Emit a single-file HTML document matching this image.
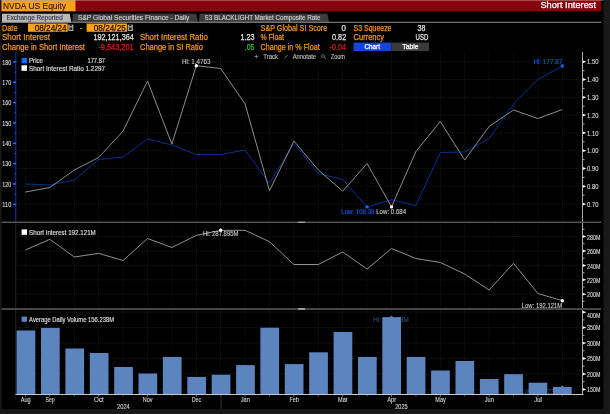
<!DOCTYPE html>
<html><head><meta charset="utf-8"><style>
html,body{margin:0;padding:0;background:#191919;}
body{width:610px;height:414px;overflow:hidden;position:relative;}
svg{display:block;position:absolute;left:-20px;top:-20px;filter:blur(0.35px);}
svg text{font-family:"Liberation Sans",sans-serif;}
</style></head><body>
<svg width="650" height="454" viewBox="-20 -20 650 454">
<rect x="-20" y="-20" width="650" height="454" fill="#191919"/>
<rect x="1.5" y="-10" width="601.9" height="419.2" rx="2" fill="#000"/>
<rect x="1.5" y="0" width="602" height="1" fill="#485050"/><rect x="1.5" y="0" width="599.6" height="1" fill="#a85050"/>
<rect x="1.5" y="1" width="599.6" height="10.3" fill="#89000d"/>
<rect x="1.5" y="1" width="74" height="10.3" fill="#f9a11c"/>
<rect x="1.5" y="0" width="74" height="1" fill="#c8a068"/>
<text x="3.0" y="8.7" font-size="8.6" fill="#241200" textLength="63.0" lengthAdjust="spacingAndGlyphs"  stroke="#241200" stroke-width="0.1">NVDA US Equity</text>
<text x="540.4" y="8.2" font-size="8.2" fill="#ffffff" textLength="55.6" lengthAdjust="spacingAndGlyphs"  stroke="#ffffff" stroke-width="0.25">Short Interest</text>
<path d="M2 13.8 H69.7 L71.4 22.5 H2 Z" fill="#b8b8b8"/>
<text x="6.4" y="20.3" font-size="6.6" fill="#2a3040" textLength="56.3" lengthAdjust="spacingAndGlyphs"  stroke="#2a3040" stroke-width="0.1">Exchange Reported</text>
<path d="M72.8 13.8 H196.3 L198 22.5 H72.2 Z" fill="#3c3c3c"/>
<text x="78" y="20.3" font-size="6.6" fill="#dadada" textLength="111.3" lengthAdjust="spacingAndGlyphs"  stroke="#dadada" stroke-width="0.1">S&amp;P Global Securities Finance - Daily</text>
<path d="M199.6 13.8 H327.4 L329.1 22.5 H199 Z" fill="#3c3c3c"/>
<text x="204.6" y="20.3" font-size="6.6" fill="#dadada" textLength="115.8" lengthAdjust="spacingAndGlyphs"  stroke="#dadada" stroke-width="0.1">S3 BLACKLIGHT Market Composite Rate</text>
<rect x="1.5" y="21.8" width="599.6" height="1" fill="#8c8c8c"/>
<text x="1.9" y="30.5" font-size="8.7" fill="#f5981a" textLength="15.6" lengthAdjust="spacingAndGlyphs"  stroke="#f5981a" stroke-width="0.25">Date</text>
<rect x="28" y="23.5" width="39.7" height="8.3" fill="#f9a11c"/>
<text x="34.7" y="30.5" font-size="8.7" fill="#1a0d00" textLength="31.9" lengthAdjust="spacingAndGlyphs"  stroke="#1a0d00" stroke-width="0.25">08/24/24</text>
<rect x="68.2" y="24.6" width="5.2" height="6.4" fill="#a4a4a4"/><rect x="69.7" y="24.4" width="2.2" height="1.7" fill="#181818"/><rect x="69.4" y="27.4" width="2.8" height="2.4" fill="#202020"/>
<text x="80" y="30.5" font-size="8.7" fill="#f5981a" textLength="2.4" lengthAdjust="spacingAndGlyphs"  stroke="#f5981a" stroke-width="0.25">-</text>
<rect x="86.6" y="23.5" width="40.4" height="8.3" fill="#f9a11c"/>
<text x="93.8" y="30.5" font-size="8.7" fill="#1a0d00" textLength="32.0" lengthAdjust="spacingAndGlyphs"  stroke="#1a0d00" stroke-width="0.25">08/24/25</text>
<rect x="127.7" y="24.6" width="5.2" height="6.4" fill="#a4a4a4"/><rect x="129.2" y="24.4" width="2.2" height="1.7" fill="#181818"/><rect x="128.9" y="27.4" width="2.8" height="2.4" fill="#202020"/>
<text x="260.6" y="30.5" font-size="8.7" fill="#f5981a" textLength="66.6" lengthAdjust="spacingAndGlyphs"  stroke="#f5981a" stroke-width="0.25">S&amp;P Global SI Score</text>
<text x="341.6" y="30.5" font-size="8.7" fill="#e4e4e4" textLength="4.4" lengthAdjust="spacingAndGlyphs"  stroke="#e4e4e4" stroke-width="0.25">0</text>
<text x="353.6" y="30.5" font-size="8.7" fill="#f5981a" textLength="37.9" lengthAdjust="spacingAndGlyphs"  stroke="#f5981a" stroke-width="0.25">S3 Squeeze</text>
<text x="417.5" y="30.5" font-size="8.7" fill="#e4e4e4" textLength="7.9" lengthAdjust="spacingAndGlyphs"  stroke="#e4e4e4" stroke-width="0.25">38</text>
<text x="1.9" y="39.9" font-size="8.7" fill="#f5981a" textLength="48.1" lengthAdjust="spacingAndGlyphs"  stroke="#f5981a" stroke-width="0.25">Short Interest</text>
<text x="93.5" y="39.9" font-size="8.7" fill="#e4e4e4" textLength="40.2" lengthAdjust="spacingAndGlyphs"  stroke="#e4e4e4" stroke-width="0.25">192,121,364</text>
<text x="140" y="39.9" font-size="8.7" fill="#f5981a" textLength="67.8" lengthAdjust="spacingAndGlyphs"  stroke="#f5981a" stroke-width="0.25">Short Interest Ratio</text>
<text x="240.5" y="39.9" font-size="8.7" fill="#e4e4e4" textLength="14.0" lengthAdjust="spacingAndGlyphs"  stroke="#e4e4e4" stroke-width="0.25">1.23</text>
<text x="260.6" y="39.9" font-size="8.7" fill="#f5981a" textLength="23.4" lengthAdjust="spacingAndGlyphs"  stroke="#f5981a" stroke-width="0.25">% Float</text>
<text x="332" y="39.9" font-size="8.7" fill="#e4e4e4" textLength="14.2" lengthAdjust="spacingAndGlyphs"  stroke="#e4e4e4" stroke-width="0.25">0.82</text>
<text x="353.6" y="39.9" font-size="8.7" fill="#f5981a" textLength="30.4" lengthAdjust="spacingAndGlyphs"  stroke="#f5981a" stroke-width="0.25">Currency</text>
<text x="415.6" y="39.9" font-size="8.7" fill="#e4e4e4" textLength="12.7" lengthAdjust="spacingAndGlyphs"  stroke="#e4e4e4" stroke-width="0.25">USD</text>
<text x="1.9" y="49.6" font-size="8.7" fill="#f5981a" textLength="83.1" lengthAdjust="spacingAndGlyphs"  stroke="#f5981a" stroke-width="0.25">Change in Short Interest</text>
<text x="98.4" y="49.6" font-size="8.7" fill="#e01a1a" textLength="35.3" lengthAdjust="spacingAndGlyphs"  stroke="#e01a1a" stroke-width="0.25">-9,543,201</text>
<text x="140" y="49.6" font-size="8.7" fill="#f5981a" textLength="62.9" lengthAdjust="spacingAndGlyphs"  stroke="#f5981a" stroke-width="0.25">Change in SI Ratio</text>
<text x="244.7" y="49.6" font-size="8.7" fill="#22c022" textLength="9.8" lengthAdjust="spacingAndGlyphs"  stroke="#22c022" stroke-width="0.25">.05</text>
<text x="260.6" y="49.6" font-size="8.7" fill="#f5981a" textLength="59.1" lengthAdjust="spacingAndGlyphs"  stroke="#f5981a" stroke-width="0.25">Change in % Float</text>
<text x="329.5" y="49.6" font-size="8.7" fill="#e01a1a" textLength="16.4" lengthAdjust="spacingAndGlyphs"  stroke="#e01a1a" stroke-width="0.25">-0.04</text>
<rect x="353.6" y="42.6" width="37.6" height="8.4" fill="#1246d8"/>
<text x="364.4" y="49.2" font-size="6.8" fill="#ffffff" textLength="15.6" lengthAdjust="spacingAndGlyphs"  stroke="#ffffff" stroke-width="0.25">Chart</text>
<rect x="391.2" y="42.6" width="37.8" height="8.4" fill="#3a3a3a"/>
<text x="402.3" y="49.2" font-size="6.8" fill="#ffffff" textLength="16.2" lengthAdjust="spacingAndGlyphs"  stroke="#ffffff" stroke-width="0.25">Table</text>
<line x1="25.5" y1="52" x2="25.5" y2="221" stroke="#181818" stroke-width="0.8" stroke-dasharray="1,1"/>
<line x1="25.5" y1="224" x2="25.5" y2="307.5" stroke="#181818" stroke-width="0.8" stroke-dasharray="1,1"/>
<line x1="25.5" y1="311" x2="25.5" y2="394.5" stroke="#181818" stroke-width="0.8" stroke-dasharray="1,1"/>
<line x1="50.0" y1="52" x2="50.0" y2="221" stroke="#181818" stroke-width="0.8" stroke-dasharray="1,1"/>
<line x1="50.0" y1="224" x2="50.0" y2="307.5" stroke="#181818" stroke-width="0.8" stroke-dasharray="1,1"/>
<line x1="50.0" y1="311" x2="50.0" y2="394.5" stroke="#181818" stroke-width="0.8" stroke-dasharray="1,1"/>
<line x1="74.5" y1="52" x2="74.5" y2="221" stroke="#181818" stroke-width="0.8" stroke-dasharray="1,1"/>
<line x1="74.5" y1="224" x2="74.5" y2="307.5" stroke="#181818" stroke-width="0.8" stroke-dasharray="1,1"/>
<line x1="74.5" y1="311" x2="74.5" y2="394.5" stroke="#181818" stroke-width="0.8" stroke-dasharray="1,1"/>
<line x1="98.5" y1="52" x2="98.5" y2="221" stroke="#181818" stroke-width="0.8" stroke-dasharray="1,1"/>
<line x1="98.5" y1="224" x2="98.5" y2="307.5" stroke="#181818" stroke-width="0.8" stroke-dasharray="1,1"/>
<line x1="98.5" y1="311" x2="98.5" y2="394.5" stroke="#181818" stroke-width="0.8" stroke-dasharray="1,1"/>
<line x1="123.0" y1="52" x2="123.0" y2="221" stroke="#181818" stroke-width="0.8" stroke-dasharray="1,1"/>
<line x1="123.0" y1="224" x2="123.0" y2="307.5" stroke="#181818" stroke-width="0.8" stroke-dasharray="1,1"/>
<line x1="123.0" y1="311" x2="123.0" y2="394.5" stroke="#181818" stroke-width="0.8" stroke-dasharray="1,1"/>
<line x1="147.5" y1="52" x2="147.5" y2="221" stroke="#181818" stroke-width="0.8" stroke-dasharray="1,1"/>
<line x1="147.5" y1="224" x2="147.5" y2="307.5" stroke="#181818" stroke-width="0.8" stroke-dasharray="1,1"/>
<line x1="147.5" y1="311" x2="147.5" y2="394.5" stroke="#181818" stroke-width="0.8" stroke-dasharray="1,1"/>
<line x1="172.0" y1="52" x2="172.0" y2="221" stroke="#181818" stroke-width="0.8" stroke-dasharray="1,1"/>
<line x1="172.0" y1="224" x2="172.0" y2="307.5" stroke="#181818" stroke-width="0.8" stroke-dasharray="1,1"/>
<line x1="172.0" y1="311" x2="172.0" y2="394.5" stroke="#181818" stroke-width="0.8" stroke-dasharray="1,1"/>
<line x1="196.5" y1="52" x2="196.5" y2="221" stroke="#181818" stroke-width="0.8" stroke-dasharray="1,1"/>
<line x1="196.5" y1="224" x2="196.5" y2="307.5" stroke="#181818" stroke-width="0.8" stroke-dasharray="1,1"/>
<line x1="196.5" y1="311" x2="196.5" y2="394.5" stroke="#181818" stroke-width="0.8" stroke-dasharray="1,1"/>
<line x1="220.5" y1="52" x2="220.5" y2="221" stroke="#181818" stroke-width="0.8" stroke-dasharray="1,1"/>
<line x1="220.5" y1="224" x2="220.5" y2="307.5" stroke="#181818" stroke-width="0.8" stroke-dasharray="1,1"/>
<line x1="220.5" y1="311" x2="220.5" y2="394.5" stroke="#181818" stroke-width="0.8" stroke-dasharray="1,1"/>
<line x1="245.0" y1="52" x2="245.0" y2="221" stroke="#181818" stroke-width="0.8" stroke-dasharray="1,1"/>
<line x1="245.0" y1="224" x2="245.0" y2="307.5" stroke="#181818" stroke-width="0.8" stroke-dasharray="1,1"/>
<line x1="245.0" y1="311" x2="245.0" y2="394.5" stroke="#181818" stroke-width="0.8" stroke-dasharray="1,1"/>
<line x1="269.5" y1="52" x2="269.5" y2="221" stroke="#181818" stroke-width="0.8" stroke-dasharray="1,1"/>
<line x1="269.5" y1="224" x2="269.5" y2="307.5" stroke="#181818" stroke-width="0.8" stroke-dasharray="1,1"/>
<line x1="269.5" y1="311" x2="269.5" y2="394.5" stroke="#181818" stroke-width="0.8" stroke-dasharray="1,1"/>
<line x1="294.0" y1="52" x2="294.0" y2="221" stroke="#181818" stroke-width="0.8" stroke-dasharray="1,1"/>
<line x1="294.0" y1="224" x2="294.0" y2="307.5" stroke="#181818" stroke-width="0.8" stroke-dasharray="1,1"/>
<line x1="294.0" y1="311" x2="294.0" y2="394.5" stroke="#181818" stroke-width="0.8" stroke-dasharray="1,1"/>
<line x1="318.5" y1="52" x2="318.5" y2="221" stroke="#181818" stroke-width="0.8" stroke-dasharray="1,1"/>
<line x1="318.5" y1="224" x2="318.5" y2="307.5" stroke="#181818" stroke-width="0.8" stroke-dasharray="1,1"/>
<line x1="318.5" y1="311" x2="318.5" y2="394.5" stroke="#181818" stroke-width="0.8" stroke-dasharray="1,1"/>
<line x1="342.5" y1="52" x2="342.5" y2="221" stroke="#181818" stroke-width="0.8" stroke-dasharray="1,1"/>
<line x1="342.5" y1="224" x2="342.5" y2="307.5" stroke="#181818" stroke-width="0.8" stroke-dasharray="1,1"/>
<line x1="342.5" y1="311" x2="342.5" y2="394.5" stroke="#181818" stroke-width="0.8" stroke-dasharray="1,1"/>
<line x1="367.0" y1="52" x2="367.0" y2="221" stroke="#181818" stroke-width="0.8" stroke-dasharray="1,1"/>
<line x1="367.0" y1="224" x2="367.0" y2="307.5" stroke="#181818" stroke-width="0.8" stroke-dasharray="1,1"/>
<line x1="367.0" y1="311" x2="367.0" y2="394.5" stroke="#181818" stroke-width="0.8" stroke-dasharray="1,1"/>
<line x1="391.5" y1="52" x2="391.5" y2="221" stroke="#181818" stroke-width="0.8" stroke-dasharray="1,1"/>
<line x1="391.5" y1="224" x2="391.5" y2="307.5" stroke="#181818" stroke-width="0.8" stroke-dasharray="1,1"/>
<line x1="391.5" y1="311" x2="391.5" y2="394.5" stroke="#181818" stroke-width="0.8" stroke-dasharray="1,1"/>
<line x1="416.0" y1="52" x2="416.0" y2="221" stroke="#181818" stroke-width="0.8" stroke-dasharray="1,1"/>
<line x1="416.0" y1="224" x2="416.0" y2="307.5" stroke="#181818" stroke-width="0.8" stroke-dasharray="1,1"/>
<line x1="416.0" y1="311" x2="416.0" y2="394.5" stroke="#181818" stroke-width="0.8" stroke-dasharray="1,1"/>
<line x1="440.5" y1="52" x2="440.5" y2="221" stroke="#181818" stroke-width="0.8" stroke-dasharray="1,1"/>
<line x1="440.5" y1="224" x2="440.5" y2="307.5" stroke="#181818" stroke-width="0.8" stroke-dasharray="1,1"/>
<line x1="440.5" y1="311" x2="440.5" y2="394.5" stroke="#181818" stroke-width="0.8" stroke-dasharray="1,1"/>
<line x1="464.5" y1="52" x2="464.5" y2="221" stroke="#181818" stroke-width="0.8" stroke-dasharray="1,1"/>
<line x1="464.5" y1="224" x2="464.5" y2="307.5" stroke="#181818" stroke-width="0.8" stroke-dasharray="1,1"/>
<line x1="464.5" y1="311" x2="464.5" y2="394.5" stroke="#181818" stroke-width="0.8" stroke-dasharray="1,1"/>
<line x1="489.0" y1="52" x2="489.0" y2="221" stroke="#181818" stroke-width="0.8" stroke-dasharray="1,1"/>
<line x1="489.0" y1="224" x2="489.0" y2="307.5" stroke="#181818" stroke-width="0.8" stroke-dasharray="1,1"/>
<line x1="489.0" y1="311" x2="489.0" y2="394.5" stroke="#181818" stroke-width="0.8" stroke-dasharray="1,1"/>
<line x1="513.5" y1="52" x2="513.5" y2="221" stroke="#181818" stroke-width="0.8" stroke-dasharray="1,1"/>
<line x1="513.5" y1="224" x2="513.5" y2="307.5" stroke="#181818" stroke-width="0.8" stroke-dasharray="1,1"/>
<line x1="513.5" y1="311" x2="513.5" y2="394.5" stroke="#181818" stroke-width="0.8" stroke-dasharray="1,1"/>
<line x1="538.0" y1="52" x2="538.0" y2="221" stroke="#181818" stroke-width="0.8" stroke-dasharray="1,1"/>
<line x1="538.0" y1="224" x2="538.0" y2="307.5" stroke="#181818" stroke-width="0.8" stroke-dasharray="1,1"/>
<line x1="538.0" y1="311" x2="538.0" y2="394.5" stroke="#181818" stroke-width="0.8" stroke-dasharray="1,1"/>
<line x1="562.5" y1="52" x2="562.5" y2="221" stroke="#181818" stroke-width="0.8" stroke-dasharray="1,1"/>
<line x1="562.5" y1="224" x2="562.5" y2="307.5" stroke="#181818" stroke-width="0.8" stroke-dasharray="1,1"/>
<line x1="562.5" y1="311" x2="562.5" y2="394.5" stroke="#181818" stroke-width="0.8" stroke-dasharray="1,1"/>
<line x1="16" y1="61.75" x2="583" y2="61.75" stroke="#1d1d1d" stroke-width="0.8" stroke-dasharray="1,1"/>
<line x1="16" y1="79.53999999999999" x2="583" y2="79.53999999999999" stroke="#1d1d1d" stroke-width="0.8" stroke-dasharray="1,1"/>
<line x1="16" y1="97.33" x2="583" y2="97.33" stroke="#1d1d1d" stroke-width="0.8" stroke-dasharray="1,1"/>
<line x1="16" y1="115.12" x2="583" y2="115.12" stroke="#1d1d1d" stroke-width="0.8" stroke-dasharray="1,1"/>
<line x1="16" y1="132.91" x2="583" y2="132.91" stroke="#1d1d1d" stroke-width="0.8" stroke-dasharray="1,1"/>
<line x1="16" y1="150.7" x2="583" y2="150.7" stroke="#1d1d1d" stroke-width="0.8" stroke-dasharray="1,1"/>
<line x1="16" y1="168.49" x2="583" y2="168.49" stroke="#1d1d1d" stroke-width="0.8" stroke-dasharray="1,1"/>
<line x1="16" y1="186.28" x2="583" y2="186.28" stroke="#1d1d1d" stroke-width="0.8" stroke-dasharray="1,1"/>
<line x1="16" y1="204.07" x2="583" y2="204.07" stroke="#1d1d1d" stroke-width="0.8" stroke-dasharray="1,1"/>
<line x1="16" y1="236.5" x2="583" y2="236.5" stroke="#1d1d1d" stroke-width="0.8" stroke-dasharray="1,1"/>
<line x1="16" y1="251" x2="583" y2="251" stroke="#1d1d1d" stroke-width="0.8" stroke-dasharray="1,1"/>
<line x1="16" y1="265.5" x2="583" y2="265.5" stroke="#1d1d1d" stroke-width="0.8" stroke-dasharray="1,1"/>
<line x1="16" y1="279.8" x2="583" y2="279.8" stroke="#1d1d1d" stroke-width="0.8" stroke-dasharray="1,1"/>
<line x1="16" y1="294.2" x2="583" y2="294.2" stroke="#1d1d1d" stroke-width="0.8" stroke-dasharray="1,1"/>
<line x1="16" y1="312.2" x2="583" y2="312.2" stroke="#1d1d1d" stroke-width="0.8" stroke-dasharray="1,1"/>
<line x1="16" y1="327.64" x2="583" y2="327.64" stroke="#1d1d1d" stroke-width="0.8" stroke-dasharray="1,1"/>
<line x1="16" y1="343.08" x2="583" y2="343.08" stroke="#1d1d1d" stroke-width="0.8" stroke-dasharray="1,1"/>
<line x1="16" y1="358.52" x2="583" y2="358.52" stroke="#1d1d1d" stroke-width="0.8" stroke-dasharray="1,1"/>
<line x1="16" y1="373.96" x2="583" y2="373.96" stroke="#1d1d1d" stroke-width="0.8" stroke-dasharray="1,1"/>
<line x1="16" y1="389.4" x2="583" y2="389.4" stroke="#1d1d1d" stroke-width="0.8" stroke-dasharray="1,1"/>
<rect x="15.1" y="52" width="1.2" height="170" fill="#0b2c94"/>
<text x="2.3" y="64.5" font-size="6.8" fill="#dcdcdc" textLength="9.0" lengthAdjust="spacingAndGlyphs"  stroke="#dcdcdc" stroke-width="0.12">180</text>
<rect x="13" y="61.1" width="3.2" height="1.5" fill="#1f6fff"/>
<rect x="14.2" y="71.6" width="1.5" height="1" fill="#1a5ae0"/>
<text x="2.3" y="84.8" font-size="6.8" fill="#dcdcdc" textLength="9.0" lengthAdjust="spacingAndGlyphs"  stroke="#dcdcdc" stroke-width="0.12">170</text>
<rect x="13" y="81.5" width="3.2" height="1.5" fill="#1f6fff"/>
<rect x="14.2" y="92.0" width="1.5" height="1" fill="#1a5ae0"/>
<text x="2.3" y="105.2" font-size="6.8" fill="#dcdcdc" textLength="9.0" lengthAdjust="spacingAndGlyphs"  stroke="#dcdcdc" stroke-width="0.12">160</text>
<rect x="13" y="101.8" width="3.2" height="1.5" fill="#1f6fff"/>
<rect x="14.2" y="112.3" width="1.5" height="1" fill="#1a5ae0"/>
<text x="2.3" y="125.5" font-size="6.8" fill="#dcdcdc" textLength="9.0" lengthAdjust="spacingAndGlyphs"  stroke="#dcdcdc" stroke-width="0.12">150</text>
<rect x="13" y="122.2" width="3.2" height="1.5" fill="#1f6fff"/>
<rect x="14.2" y="132.7" width="1.5" height="1" fill="#1a5ae0"/>
<text x="2.3" y="145.9" font-size="6.8" fill="#dcdcdc" textLength="9.0" lengthAdjust="spacingAndGlyphs"  stroke="#dcdcdc" stroke-width="0.12">140</text>
<rect x="13" y="142.6" width="3.2" height="1.5" fill="#1f6fff"/>
<rect x="14.2" y="153.0" width="1.5" height="1" fill="#1a5ae0"/>
<text x="2.3" y="166.2" font-size="6.8" fill="#dcdcdc" textLength="9.0" lengthAdjust="spacingAndGlyphs"  stroke="#dcdcdc" stroke-width="0.12">130</text>
<rect x="13" y="162.9" width="3.2" height="1.5" fill="#1f6fff"/>
<rect x="14.2" y="173.3" width="1.5" height="1" fill="#1a5ae0"/>
<text x="2.3" y="186.6" font-size="6.8" fill="#dcdcdc" textLength="9.0" lengthAdjust="spacingAndGlyphs"  stroke="#dcdcdc" stroke-width="0.12">120</text>
<rect x="13" y="183.2" width="3.2" height="1.5" fill="#1f6fff"/>
<rect x="14.2" y="193.7" width="1.5" height="1" fill="#1a5ae0"/>
<text x="2.3" y="207.0" font-size="6.8" fill="#dcdcdc" textLength="9.0" lengthAdjust="spacingAndGlyphs"  stroke="#dcdcdc" stroke-width="0.12">110</text>
<rect x="13" y="203.6" width="3.2" height="1.5" fill="#1f6fff"/>
<rect x="15.3" y="223.5" width="0.9" height="170.5" fill="#2a2a30"/>
<rect x="582" y="51.9" width="1" height="342.6" fill="#a8a8a8"/>
<path d="M582.8 60.4 l3.6 1.4 l-3.6 1.4 z" fill="#f4f4f4"/>
<text x="587.1" y="64.3" font-size="6.8" fill="#dcdcdc" textLength="11.3" lengthAdjust="spacingAndGlyphs"  stroke="#dcdcdc" stroke-width="0.12">1.50</text>
<rect x="583" y="70.2" width="1.5" height="1" fill="#b0b0b0"/>
<path d="M582.8 78.1 l3.6 1.4 l-3.6 1.4 z" fill="#f4f4f4"/>
<text x="587.1" y="82.1" font-size="6.8" fill="#dcdcdc" textLength="11.3" lengthAdjust="spacingAndGlyphs"  stroke="#dcdcdc" stroke-width="0.12">1.40</text>
<rect x="583" y="87.9" width="1.5" height="1" fill="#b0b0b0"/>
<path d="M582.8 95.9 l3.6 1.4 l-3.6 1.4 z" fill="#f4f4f4"/>
<text x="587.1" y="99.9" font-size="6.8" fill="#dcdcdc" textLength="11.3" lengthAdjust="spacingAndGlyphs"  stroke="#dcdcdc" stroke-width="0.12">1.30</text>
<rect x="583" y="105.7" width="1.5" height="1" fill="#b0b0b0"/>
<path d="M582.8 113.7 l3.6 1.4 l-3.6 1.4 z" fill="#f4f4f4"/>
<text x="587.1" y="117.7" font-size="6.8" fill="#dcdcdc" textLength="11.3" lengthAdjust="spacingAndGlyphs"  stroke="#dcdcdc" stroke-width="0.12">1.20</text>
<rect x="583" y="123.5" width="1.5" height="1" fill="#b0b0b0"/>
<path d="M582.8 131.5 l3.6 1.4 l-3.6 1.4 z" fill="#f4f4f4"/>
<text x="587.1" y="135.5" font-size="6.8" fill="#dcdcdc" textLength="11.3" lengthAdjust="spacingAndGlyphs"  stroke="#dcdcdc" stroke-width="0.12">1.10</text>
<rect x="583" y="141.3" width="1.5" height="1" fill="#b0b0b0"/>
<path d="M582.8 149.3 l3.6 1.4 l-3.6 1.4 z" fill="#f4f4f4"/>
<text x="587.1" y="153.3" font-size="6.8" fill="#dcdcdc" textLength="11.3" lengthAdjust="spacingAndGlyphs"  stroke="#dcdcdc" stroke-width="0.12">1.00</text>
<rect x="583" y="159.1" width="1.5" height="1" fill="#b0b0b0"/>
<path d="M582.8 167.1 l3.6 1.4 l-3.6 1.4 z" fill="#f4f4f4"/>
<text x="587.1" y="171.1" font-size="6.8" fill="#dcdcdc" textLength="11.3" lengthAdjust="spacingAndGlyphs"  stroke="#dcdcdc" stroke-width="0.12">0.90</text>
<rect x="583" y="176.9" width="1.5" height="1" fill="#b0b0b0"/>
<path d="M582.8 184.9 l3.6 1.4 l-3.6 1.4 z" fill="#f4f4f4"/>
<text x="587.1" y="188.9" font-size="6.8" fill="#dcdcdc" textLength="11.3" lengthAdjust="spacingAndGlyphs"  stroke="#dcdcdc" stroke-width="0.12">0.80</text>
<rect x="583" y="194.7" width="1.5" height="1" fill="#b0b0b0"/>
<path d="M582.8 202.7 l3.6 1.4 l-3.6 1.4 z" fill="#f4f4f4"/>
<text x="587.1" y="206.7" font-size="6.8" fill="#dcdcdc" textLength="11.3" lengthAdjust="spacingAndGlyphs"  stroke="#dcdcdc" stroke-width="0.12">0.70</text>
<path d="M582.8 235.1 l3.6 1.4 l-3.6 1.4 z" fill="#f4f4f4"/>
<text x="587.1" y="239.6" font-size="6.8" fill="#dcdcdc" textLength="13.3" lengthAdjust="spacingAndGlyphs"  stroke="#dcdcdc" stroke-width="0.12">280M</text>
<rect x="583" y="243.2" width="1.5" height="1" fill="#b0b0b0"/>
<path d="M582.8 249.6 l3.6 1.4 l-3.6 1.4 z" fill="#f4f4f4"/>
<text x="587.1" y="254.1" font-size="6.8" fill="#dcdcdc" textLength="13.3" lengthAdjust="spacingAndGlyphs"  stroke="#dcdcdc" stroke-width="0.12">260M</text>
<rect x="583" y="257.7" width="1.5" height="1" fill="#b0b0b0"/>
<path d="M582.8 264.1 l3.6 1.4 l-3.6 1.4 z" fill="#f4f4f4"/>
<text x="587.1" y="268.6" font-size="6.8" fill="#dcdcdc" textLength="13.3" lengthAdjust="spacingAndGlyphs"  stroke="#dcdcdc" stroke-width="0.12">240M</text>
<rect x="583" y="272.2" width="1.5" height="1" fill="#b0b0b0"/>
<path d="M582.8 278.4 l3.6 1.4 l-3.6 1.4 z" fill="#f4f4f4"/>
<text x="587.1" y="282.9" font-size="6.8" fill="#dcdcdc" textLength="13.3" lengthAdjust="spacingAndGlyphs"  stroke="#dcdcdc" stroke-width="0.12">220M</text>
<rect x="583" y="286.5" width="1.5" height="1" fill="#b0b0b0"/>
<path d="M582.8 292.8 l3.6 1.4 l-3.6 1.4 z" fill="#f4f4f4"/>
<text x="587.1" y="297.3" font-size="6.8" fill="#dcdcdc" textLength="13.3" lengthAdjust="spacingAndGlyphs"  stroke="#dcdcdc" stroke-width="0.12">200M</text>
<rect x="583" y="300.9" width="1.5" height="1" fill="#b0b0b0"/>
<rect x="583" y="228.8" width="1.5" height="1" fill="#b0b0b0"/>
<path d="M582.8 310.8 l3.6 1.4 l-3.6 1.4 z" fill="#f4f4f4"/>
<text x="587.1" y="317.7" font-size="6.8" fill="#dcdcdc" textLength="13.3" lengthAdjust="spacingAndGlyphs"  stroke="#dcdcdc" stroke-width="0.12">400M</text>
<rect x="583" y="319.4" width="1.5" height="1" fill="#b0b0b0"/>
<path d="M582.8 326.2 l3.6 1.4 l-3.6 1.4 z" fill="#f4f4f4"/>
<text x="587.1" y="330.2" font-size="6.8" fill="#dcdcdc" textLength="13.3" lengthAdjust="spacingAndGlyphs"  stroke="#dcdcdc" stroke-width="0.12">350M</text>
<rect x="583" y="334.8" width="1.5" height="1" fill="#b0b0b0"/>
<path d="M582.8 341.7 l3.6 1.4 l-3.6 1.4 z" fill="#f4f4f4"/>
<text x="587.1" y="345.7" font-size="6.8" fill="#dcdcdc" textLength="13.3" lengthAdjust="spacingAndGlyphs"  stroke="#dcdcdc" stroke-width="0.12">300M</text>
<rect x="583" y="350.3" width="1.5" height="1" fill="#b0b0b0"/>
<path d="M582.8 357.1 l3.6 1.4 l-3.6 1.4 z" fill="#f4f4f4"/>
<text x="587.1" y="361.1" font-size="6.8" fill="#dcdcdc" textLength="13.3" lengthAdjust="spacingAndGlyphs"  stroke="#dcdcdc" stroke-width="0.12">250M</text>
<rect x="583" y="365.7" width="1.5" height="1" fill="#b0b0b0"/>
<path d="M582.8 372.6 l3.6 1.4 l-3.6 1.4 z" fill="#f4f4f4"/>
<text x="587.1" y="376.6" font-size="6.8" fill="#dcdcdc" textLength="13.3" lengthAdjust="spacingAndGlyphs"  stroke="#dcdcdc" stroke-width="0.12">200M</text>
<rect x="583" y="381.2" width="1.5" height="1" fill="#b0b0b0"/>
<path d="M582.8 388.0 l3.6 1.4 l-3.6 1.4 z" fill="#f4f4f4"/>
<text x="587.1" y="392.0" font-size="6.8" fill="#dcdcdc" textLength="13.3" lengthAdjust="spacingAndGlyphs"  stroke="#dcdcdc" stroke-width="0.12">150M</text>
<rect x="1.5" y="221.6" width="599.5" height="1.4" fill="#585858"/><rect x="298.1" y="221.6" width="6.9" height="1.4" fill="#a4a4a4"/>
<rect x="1.5" y="308" width="599.5" height="2" fill="#464646"/><rect x="298.1" y="308.1" width="6.9" height="1.8" fill="#a4a4a4"/>
<text x="373" y="322.2" font-size="6.5" fill="#38588a" textLength="35.9" lengthAdjust="spacingAndGlyphs" >Hi: 392.93M</text>
<text x="521.7" y="394" font-size="6.5" fill="#38588a" textLength="40.6" lengthAdjust="spacingAndGlyphs" >Low: 156.238M</text>
<rect x="16.6" y="330.5" width="18.7" height="64.0" fill="#5c84be"/>
<rect x="41.0" y="327.9" width="18.7" height="66.6" fill="#5c84be"/>
<rect x="65.4" y="348.5" width="18.7" height="46.0" fill="#5c84be"/>
<rect x="89.8" y="353.0" width="18.7" height="41.5" fill="#5c84be"/>
<rect x="114.2" y="367.0" width="18.7" height="27.5" fill="#5c84be"/>
<rect x="138.5" y="373.5" width="18.7" height="21.0" fill="#5c84be"/>
<rect x="162.9" y="357.0" width="18.7" height="37.5" fill="#5c84be"/>
<rect x="187.3" y="376.9" width="18.7" height="17.6" fill="#5c84be"/>
<rect x="211.7" y="374.7" width="18.7" height="19.8" fill="#5c84be"/>
<rect x="236.1" y="365.1" width="18.7" height="29.4" fill="#5c84be"/>
<rect x="260.4" y="327.7" width="18.7" height="66.8" fill="#5c84be"/>
<rect x="284.8" y="364.1" width="18.7" height="30.4" fill="#5c84be"/>
<rect x="309.2" y="352.3" width="18.7" height="42.2" fill="#5c84be"/>
<rect x="333.6" y="332.0" width="18.7" height="62.5" fill="#5c84be"/>
<rect x="358.0" y="357.0" width="18.7" height="37.5" fill="#5c84be"/>
<rect x="382.3" y="317.2" width="18.7" height="77.3" fill="#5c84be"/>
<rect x="406.7" y="357.0" width="18.7" height="37.5" fill="#5c84be"/>
<rect x="431.1" y="370.5" width="18.7" height="24.0" fill="#5c84be"/>
<rect x="455.5" y="361.0" width="18.7" height="33.5" fill="#5c84be"/>
<rect x="479.9" y="379.0" width="18.7" height="15.5" fill="#5c84be"/>
<rect x="504.2" y="374.2" width="18.7" height="20.3" fill="#5c84be"/>
<rect x="528.6" y="382.7" width="18.7" height="11.8" fill="#5c84be"/>
<rect x="553.0" y="387.0" width="18.7" height="7.5" fill="#5c84be"/>
<rect x="15.3" y="394" width="568.2" height="1" fill="#c8c8c8"/>
<rect x="25.1" y="395" width="0.8" height="1.8" fill="#808080"/>
<rect x="49.5" y="395" width="0.8" height="1.8" fill="#808080"/>
<rect x="73.9" y="395" width="0.8" height="1.2" fill="#808080"/>
<rect x="98.3" y="395" width="0.8" height="1.8" fill="#808080"/>
<rect x="122.7" y="395" width="0.8" height="1.2" fill="#808080"/>
<rect x="147.1" y="395" width="0.8" height="1.8" fill="#808080"/>
<rect x="171.5" y="395" width="0.8" height="1.2" fill="#808080"/>
<rect x="195.9" y="395" width="0.8" height="1.8" fill="#808080"/>
<rect x="220.3" y="395" width="0.8" height="1.2" fill="#808080"/>
<rect x="244.7" y="395" width="0.8" height="1.8" fill="#808080"/>
<rect x="269.1" y="395" width="0.8" height="1.2" fill="#808080"/>
<rect x="293.5" y="395" width="0.8" height="1.8" fill="#808080"/>
<rect x="317.9" y="395" width="0.8" height="1.2" fill="#808080"/>
<rect x="342.3" y="395" width="0.8" height="1.8" fill="#808080"/>
<rect x="366.7" y="395" width="0.8" height="1.2" fill="#808080"/>
<rect x="391.1" y="395" width="0.8" height="1.8" fill="#808080"/>
<rect x="415.5" y="395" width="0.8" height="1.2" fill="#808080"/>
<rect x="439.9" y="395" width="0.8" height="1.8" fill="#808080"/>
<rect x="464.3" y="395" width="0.8" height="1.2" fill="#808080"/>
<rect x="488.7" y="395" width="0.8" height="1.8" fill="#808080"/>
<rect x="513.1" y="395" width="0.8" height="1.2" fill="#808080"/>
<rect x="537.5" y="395" width="0.8" height="1.8" fill="#808080"/>
<rect x="561.9" y="395" width="0.8" height="1.2" fill="#808080"/>
<polyline points="25.5,184.0 49.9,185.0 74.3,180.0 98.7,159.5 123.1,157.0 147.5,139.0 171.9,145.0 196.3,154.5 220.7,154.5 245.1,150.0 269.5,183.3 293.9,143.5 318.3,173.5 342.7,179.5 367.1,206.9 391.5,199.7 415.9,205.6 440.3,152.5 464.7,152.0 489.1,138.5 513.5,104.0 537.9,79.5 562.3,66.0" fill="none" stroke="#0b319a" stroke-width="0.95" stroke-linejoin="round"/>
<polyline points="25.5,192.0 49.9,187.5 74.3,170.0 98.7,157.5 123.1,131.0 147.5,81.0 171.9,144.0 196.3,65.7 220.7,68.5 245.1,104.0 269.5,190.8 293.9,141.0 318.3,170.0 342.7,191.2 367.1,163.5 391.5,206.9 415.9,151.5 440.3,121.5 464.7,160.0 489.1,126.5 513.5,110.0 537.9,118.5 562.3,109.5" fill="none" stroke="#9c9c9c" stroke-width="0.9" stroke-linejoin="round"/>
<polyline points="25.5,249.9 49.9,239.3 74.3,257.0 98.7,253.4 123.1,260.5 147.5,238.5 171.9,247.5 196.3,235.4 220.7,230.3 245.1,230.3 269.5,241.7 293.9,264.5 318.3,264.5 342.7,252.0 367.1,269.0 391.5,248.5 415.9,258.5 440.3,262.5 464.7,274.0 489.1,290.0 513.5,263.3 537.9,293.5 562.3,300.7" fill="none" stroke="#a0a0a0" stroke-width="0.9" stroke-linejoin="round"/>
<circle cx="196.3" cy="65.7" r="1.7" fill="#fff"/>
<circle cx="391.5" cy="206.9" r="1.7" fill="#fff"/>
<circle cx="367.1" cy="206.9" r="1.7" fill="#0a6cff"/>
<circle cx="562.3" cy="66.0" r="1.7" fill="#0a6cff"/>
<circle cx="220.7" cy="230.3" r="1.7" fill="#fff"/>
<circle cx="562.3" cy="300.7" r="1.7" fill="#fff"/>
<circle cx="391.5" cy="317.2" r="1.3" fill="#5c84be"/>
<circle cx="562.3" cy="387.0" r="1.3" fill="#5c84be"/>
<text x="182" y="63.9" font-size="6.5" fill="#cacaca" textLength="28.5" lengthAdjust="spacingAndGlyphs"  stroke="#cacaca" stroke-width="0.12">Hi: 1.4763</text>
<text x="533.4" y="64.0" font-size="6.5" fill="#0e50d8" textLength="28.8" lengthAdjust="spacingAndGlyphs"  stroke="#0e50d8" stroke-width="0.2">Hi: 177.87</text>
<text x="341.3" y="213.8" font-size="6.5" fill="#0e50d8" textLength="33.1" lengthAdjust="spacingAndGlyphs"  stroke="#0e50d8" stroke-width="0.2">Low: 108.38</text>
<text x="376.2" y="213.8" font-size="6.5" fill="#cacaca" textLength="30.0" lengthAdjust="spacingAndGlyphs"  stroke="#cacaca" stroke-width="0.12">Low: 0.684</text>
<text x="203" y="235.9" font-size="6.5" fill="#cacaca" textLength="35.6" lengthAdjust="spacingAndGlyphs"  stroke="#cacaca" stroke-width="0.12">Hi: 287.895M</text>
<text x="521.7" y="307.9" font-size="6.5" fill="#cacaca" textLength="40.6" lengthAdjust="spacingAndGlyphs"  stroke="#cacaca" stroke-width="0.12">Low: 192.121M</text>
<rect x="21.6" y="58" width="5.5" height="5.3" fill="#0f6cff"/>
<text x="29" y="63.4" font-size="6.5" fill="#e0e0e0" textLength="14.0" lengthAdjust="spacingAndGlyphs"  stroke="#e0e0e0" stroke-width="0.12">Price</text>
<text x="87.5" y="63.4" font-size="6.5" fill="#e0e0e0" textLength="17.5" lengthAdjust="spacingAndGlyphs"  stroke="#e0e0e0" stroke-width="0.12">177.87</text>
<rect x="21.5" y="65.3" width="5.5" height="5.5" fill="#fff"/>
<text x="29" y="70.7" font-size="6.5" fill="#e0e0e0" textLength="76.0" lengthAdjust="spacingAndGlyphs"  stroke="#e0e0e0" stroke-width="0.12">Short Interest Ratio 1.2297</text>
<rect x="21.6" y="229.4" width="5.4" height="5.4" fill="#fff"/>
<text x="29.1" y="234.8" font-size="6.5" fill="#e0e0e0" textLength="66.7" lengthAdjust="spacingAndGlyphs"  stroke="#e0e0e0" stroke-width="0.12">Short Interest 192.121M</text>
<rect x="21.6" y="316.6" width="5.4" height="5.2" fill="#5c84be"/>
<text x="29.1" y="321.7" font-size="6.5" fill="#e0e0e0" textLength="85.0" lengthAdjust="spacingAndGlyphs"  stroke="#e0e0e0" stroke-width="0.12">Average Daily Volume 156.238M</text>
<path d="M254.4 56.5h4M256.4 54.5v4" stroke="#8a8a8a" stroke-width="0.8" fill="none"/>
<text x="263.2" y="58.7" font-size="6.5" fill="#c0c0c0" textLength="14.8" lengthAdjust="spacingAndGlyphs"  stroke="#c0c0c0" stroke-width="0.12">Track</text>
<path d="M284.5 58.3l3.2 -3.2" stroke="#8a8a8a" stroke-width="0.9" fill="none"/>
<text x="292.7" y="58.7" font-size="6.5" fill="#c0c0c0" textLength="23.3" lengthAdjust="spacingAndGlyphs"  stroke="#c0c0c0" stroke-width="0.12">Annotate</text>
<circle cx="323" cy="56" r="1.5" stroke="#8a8a8a" stroke-width="0.7" fill="none"/><path d="M324.1 57.1l1.6 1.6" stroke="#8a8a8a" stroke-width="0.8"/>
<text x="330.8" y="58.7" font-size="6.5" fill="#c0c0c0" textLength="14.2" lengthAdjust="spacingAndGlyphs"  stroke="#c0c0c0" stroke-width="0.12">Zoom</text>
<text x="20.7" y="401.6" font-size="6.5" fill="#d4d4d4" textLength="10.0" lengthAdjust="spacingAndGlyphs"  stroke="#d4d4d4" stroke-width="0.12">Aug</text>
<text x="45.5" y="401.6" font-size="6.5" fill="#d4d4d4" textLength="9.2" lengthAdjust="spacingAndGlyphs"  stroke="#d4d4d4" stroke-width="0.12">Sep</text>
<text x="94.1" y="401.6" font-size="6.5" fill="#d4d4d4" textLength="9.6" lengthAdjust="spacingAndGlyphs"  stroke="#d4d4d4" stroke-width="0.12">Oct</text>
<text x="142.8" y="401.6" font-size="6.5" fill="#d4d4d4" textLength="9.8" lengthAdjust="spacingAndGlyphs"  stroke="#d4d4d4" stroke-width="0.12">Nov</text>
<text x="191.7" y="401.6" font-size="6.5" fill="#d4d4d4" textLength="9.6" lengthAdjust="spacingAndGlyphs"  stroke="#d4d4d4" stroke-width="0.12">Dec</text>
<text x="240.8" y="401.6" font-size="6.5" fill="#d4d4d4" textLength="9.0" lengthAdjust="spacingAndGlyphs"  stroke="#d4d4d4" stroke-width="0.12">Jan</text>
<text x="289.4" y="401.6" font-size="6.5" fill="#d4d4d4" textLength="9.4" lengthAdjust="spacingAndGlyphs"  stroke="#d4d4d4" stroke-width="0.12">Feb</text>
<text x="338.1" y="401.6" font-size="6.5" fill="#d4d4d4" textLength="9.6" lengthAdjust="spacingAndGlyphs"  stroke="#d4d4d4" stroke-width="0.12">Mar</text>
<text x="387.2" y="401.6" font-size="6.5" fill="#d4d4d4" textLength="9.0" lengthAdjust="spacingAndGlyphs"  stroke="#d4d4d4" stroke-width="0.12">Apr</text>
<text x="435.3" y="401.6" font-size="6.5" fill="#d4d4d4" textLength="10.4" lengthAdjust="spacingAndGlyphs"  stroke="#d4d4d4" stroke-width="0.12">May</text>
<text x="484.8" y="401.6" font-size="6.5" fill="#d4d4d4" textLength="9.0" lengthAdjust="spacingAndGlyphs"  stroke="#d4d4d4" stroke-width="0.12">Jun</text>
<text x="534.3" y="401.6" font-size="6.5" fill="#d4d4d4" textLength="7.6" lengthAdjust="spacingAndGlyphs"  stroke="#d4d4d4" stroke-width="0.12">Jul</text>
<text x="117" y="408.8" font-size="6.5" fill="#d4d4d4" textLength="12.8" lengthAdjust="spacingAndGlyphs"  stroke="#d4d4d4" stroke-width="0.12">2024</text>
<text x="395.2" y="408.8" font-size="6.5" fill="#d4d4d4" textLength="12.4" lengthAdjust="spacingAndGlyphs"  stroke="#d4d4d4" stroke-width="0.12">2025</text>
<rect x="220.6" y="395" width="0.9" height="14" fill="#383838"/>
</svg>
</body></html>
